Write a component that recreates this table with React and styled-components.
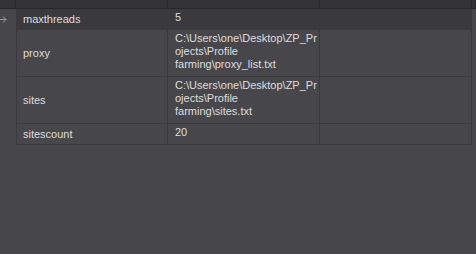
import React from 'react';
import styled, { createGlobalStyle } from 'styled-components';

const GlobalStyle = createGlobalStyle`
  html, body {
    margin: 0;
    padding: 0;
    background: #47464b;
    overflow: hidden;
  }
`;

const Grid = styled.div`
  display: grid;
  grid-template-columns: 16px 152px 152px 152px 4px;
  width: 476px;
  height: 254px;
  align-content: start;
  background: #47464b;
  font-family: "Liberation Sans", Arial, sans-serif;
  font-size: 11px;
  color: #dedede;
`;

const HeaderCell = styled.div`
  height: 8px;
  background: #333237;
  border-bottom: 1px solid #28272b;
  border-right: 1px solid #28272b;
`;

const RowHead = styled.div`
  display: flex;
  align-items: center;
  overflow: hidden;
  background: #47464b;
`;

const NameCell = styled.div`
  display: flex;
  align-items: center;
  padding: 0 6px;
  background: ${p => (p.$selected ? '#3a393e' : '#47464b')};
  border-right: 1px solid #3a393d;
  border-bottom: 1px solid #3a393d;
  border-left: 1px solid #3a393d;
`;

const ValueCell = styled.div`
  padding: 2px 7px 5px 7px;
  line-height: 13px;
  white-space: pre-line;
  background: ${p => (p.$selected ? '#3a393e' : '#47464b')};
  border-right: 1px solid #3a393d;
  border-bottom: 1px solid #3a393d;
`;

const EmptyCell = styled.div`
  background: ${p => (p.$selected ? '#3a393e' : '#47464b')};
  border-right: 1px solid #3a393d;
  border-bottom: 1px solid #3a393d;
`;

const Spacer = styled.div`
  background: #47464b;
`;

const Arrow = () => (
  <svg width="9" height="7" viewBox="0 0 9 7" style={{ marginLeft: -2 }}>
    <path d="M0 3.5H8M5 0.5L8 3.5L5 6.5" fill="none" stroke="#9c9ba0" strokeWidth="1" />
  </svg>
);

const rows = [
  { name: 'maxthreads', value: '5' },
  { name: 'proxy', value: 'C:\\Users\\one\\Desktop\\ZP_Pr\nojects\\Profile\nfarming\\proxy_list.txt' },
  { name: 'sites', value: 'C:\\Users\\one\\Desktop\\ZP_Pr\nojects\\Profile\nfarming\\sites.txt' },
  { name: 'sitescount', value: '20' },
];

const App = () => (
  <>
    <GlobalStyle />
    <Grid>
      <HeaderCell />
      <HeaderCell />
      <HeaderCell />
      <HeaderCell />
      <HeaderCell />
      {rows.map((row, i) => {
        const selected = i === 0;
        return (
          <React.Fragment key={row.name}>
            <RowHead>{selected && <Arrow />}</RowHead>
            <NameCell $selected={selected}>{row.name}</NameCell>
            <ValueCell $selected={selected}>{row.value}</ValueCell>
            <EmptyCell $selected={selected} />
            <Spacer />
          </React.Fragment>
        );
      })}
    </Grid>
  </>
);

export default App;
